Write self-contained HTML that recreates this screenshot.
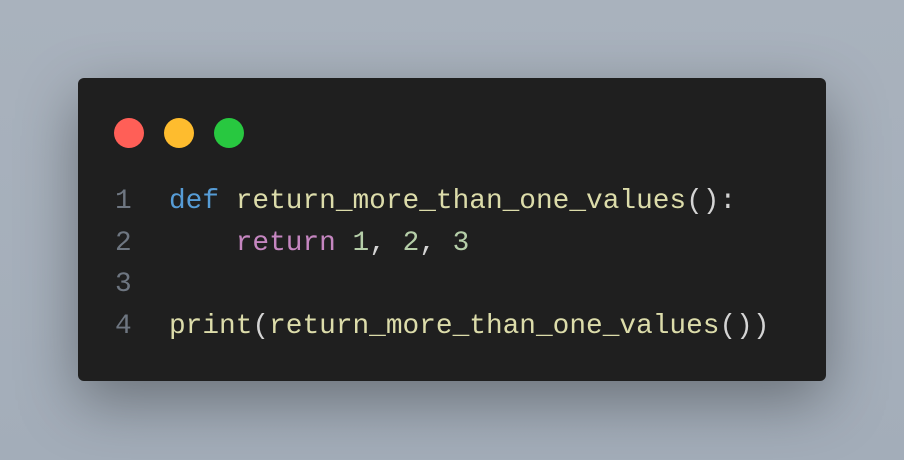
<!DOCTYPE html>
<html><head><style>
html,body{margin:0;padding:0;}
body{width:904px;height:460px;background:linear-gradient(180deg,#a9b2bd,#a3adb9);position:relative;overflow:hidden;}
.card{position:absolute;left:78px;top:78px;width:748px;height:303px;background:#1f1f1f;border-radius:6px;box-shadow:0 20px 60px rgba(0,0,0,0.35);}
.dot{position:absolute;top:118px;width:30px;height:30px;border-radius:50%;}
.code{position:absolute;left:0;top:181px;font-family:"Liberation Mono",monospace;font-size:27.8px;line-height:41.5px;}
.ln,.tx{white-space:pre;position:absolute;top:0;}
.ln{left:115px;color:#6e7681;}
.tx{left:169px;color:#d4d4d4;}
.k{color:#569cd6}.f{color:#dcdcaa}.r{color:#c586c0}.n{color:#b5cea8}
</style></head><body>
<div class="card"></div>
<div class="dot" style="left:114px;background:#ff5f57"></div>
<div class="dot" style="left:164px;background:#febc2e"></div>
<div class="dot" style="left:214px;background:#28c840"></div>
<div class="code"><div class="ln">1
2
3
4</div><div class="tx"><span class="k">def</span> <span class="f">return_more_than_one_values</span>():
    <span class="r">return</span> <span class="n">1</span>, <span class="n">2</span>, <span class="n">3</span>

<span class="f">print</span>(<span class="f">return_more_than_one_values</span>())</div></div>
</body></html>
